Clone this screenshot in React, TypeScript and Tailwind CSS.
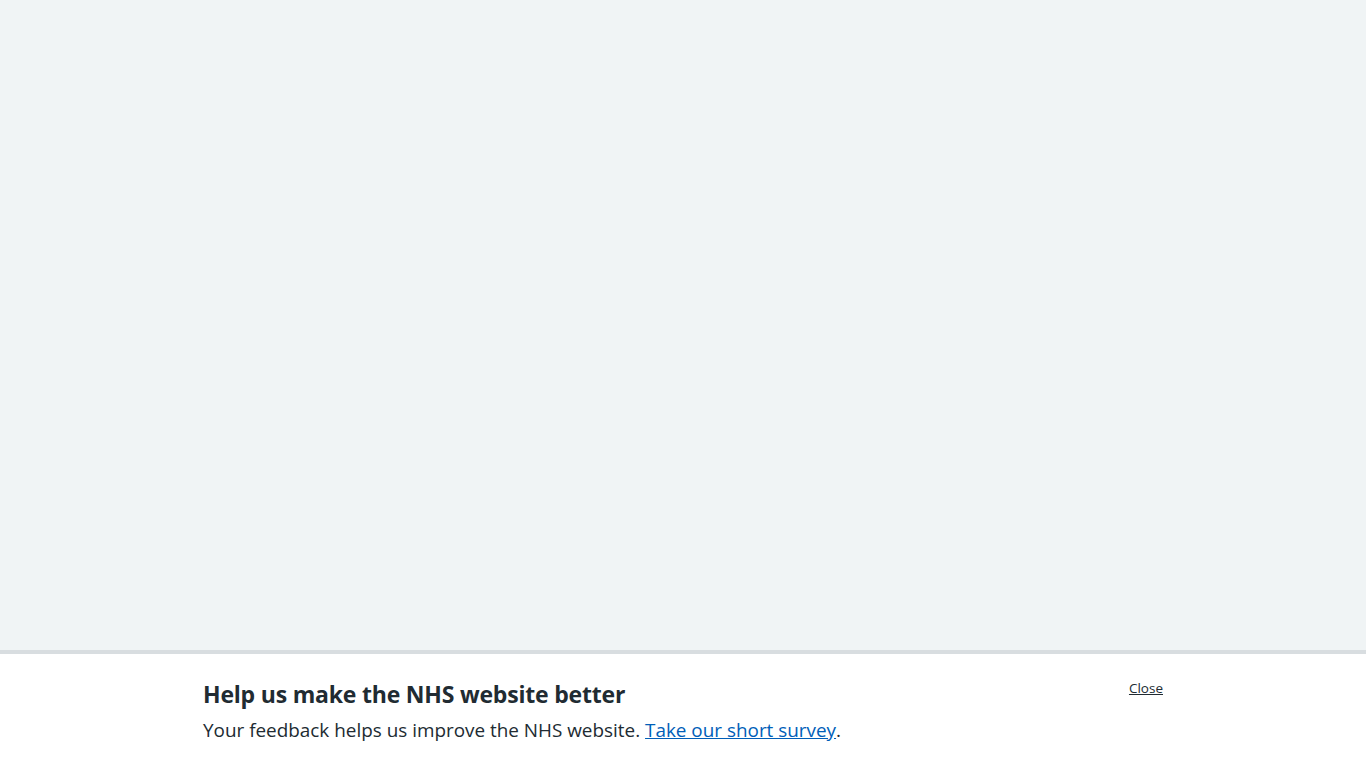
export default function App() {
  return (
    <div className="flex h-[768px] w-full flex-col bg-[#f0f4f5]" style={{ fontFamily: '"Open Sans", "Noto Sans", sans-serif' }}>
      <div className="flex-1" />
      <div className="h-[118px] border-t-4 border-[#d8dde0] bg-white">
        <div className="mx-auto flex w-[960px] items-start justify-between pt-[24px]">
          <div>
            <h2 className="text-[23px] font-bold leading-[32px] tracking-[-0.2px] text-[#212b32]">Help us make the NHS website better</h2>
            <p className="mt-[6px] text-[18.9px] leading-[28px] text-[#212b32]">
              Your feedback helps us improve the NHS website.{' '}
              <a href="#" className="text-[#005eb8] underline">Take our short survey</a>.
            </p>
          </div>
          <a href="#" className="text-[13.5px] leading-[20px] text-[#212b32] underline">Close</a>
        </div>
      </div>
    </div>
  );
}
